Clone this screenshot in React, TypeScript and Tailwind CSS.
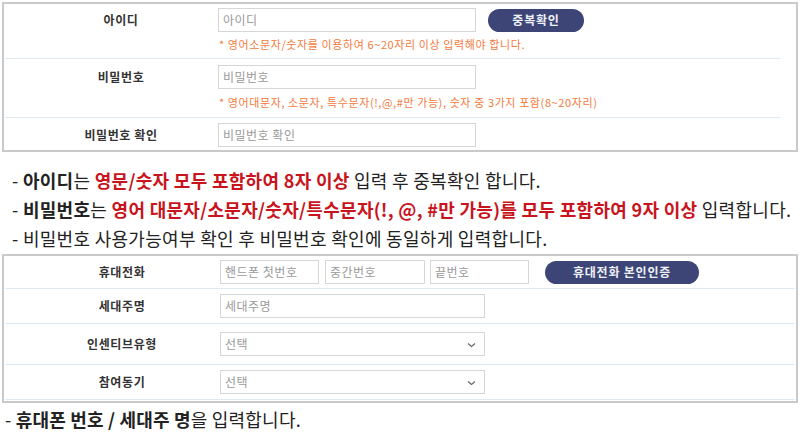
import React from "react";

const font = { fontFamily: '"Noto Sans CJK KR", "Noto Sans", sans-serif' };

function Input({ ph, w, select }: { ph: string; w: string; select?: boolean }) {
  return (
    <div className={`relative flex h-[24px] items-center border border-[#d6d6d6] bg-white pl-[4px] text-[12px] tracking-[0.5px] text-[#9a9a9a] ${w}`}>
      <span>{ph}</span>
      {select && (
        <svg className="absolute right-[8px] top-[9px]" width="9" height="6" viewBox="0 0 9 6">
          <path d="M1 1.5 L4.5 4.5 L8 1.5" fill="none" stroke="#666" strokeWidth="1.2" />
        </svg>
      )}
    </div>
  );
}

function Btn({ children, w }: { children: React.ReactNode; w: string }) {
  return (
    <div className={`flex h-[23px] items-center justify-center rounded-full bg-[#3c4576] text-[12px] font-bold tracking-[0.8px] text-[#eef0f6] ${w}`}>
      {children}
    </div>
  );
}

const labelCls = "text-[12px] font-bold tracking-[0.6px] text-[#333]";
const hintCls = "text-[11px] tracking-[0.6px] text-[#f47a3c]";

export default function App() {
  return (
    <div className="h-[437px] w-[800px] overflow-hidden bg-white text-[#222]" style={font}>
      <div className="pl-[2px] pt-[2px]">
        {/* top box */}
        <div className="h-[150px] w-[796px] border-2 border-[#c9c9c9]">
          <div className="mr-[16px] ml-[1px]">
            <div className="flex h-[55px] border-b border-[#dde9f3] pt-[4px]">
              <div className={`flex h-[24px] w-[213px] items-center justify-center pl-[19px] ${labelCls}`}>아이디</div>
              <div>
                <div className="flex items-center gap-[12px]">
                  <Input ph="아이디" w="w-[258px]" />
                  <Btn w="w-[96px]">중복확인</Btn>
                </div>
                <div className={`mt-[4px] pl-[1px] ${hintCls}`}>* 영어소문자/숫자를 이용하여 6~20자리 이상 입력해야 합니다.</div>
              </div>
            </div>
            <div className="flex h-[59px] border-b border-[#dde9f3] pt-[6px]">
              <div className={`flex h-[24px] w-[213px] items-center justify-center pl-[19px] ${labelCls}`}>비밀번호</div>
              <div>
                <Input ph="비밀번호" w="w-[258px]" />
                <div className={`mt-[5px] pl-[1px] ${hintCls}`}>* 영어대문자, 소문자, 특수문자(!,@,#만 가능), 숫자 중 3가지 포함(8~20자리)</div>
              </div>
            </div>
            <div className="flex pt-[5px]">
              <div className={`flex h-[24px] w-[213px] items-center justify-center pl-[19px] ${labelCls}`}>비밀번호 확인</div>
              <Input ph="비밀번호 확인" w="w-[258px]" />
            </div>
          </div>
        </div>
      </div>

      {/* notes */}
      <div className="pl-[12px] pt-[14px] text-[18px] leading-[29px] tracking-[0.3px] text-[#222]">
        <div>- <b>아이디</b>는 <b className="text-[#c8141c]">영문/숫자 모두 포함하여 8자 이상</b> 입력 후 중복확인 합니다.</div>
        <div>- <b>비밀번호</b>는 <b className="text-[#c8141c]">영어 대문자/소문자/숫자/특수문자(!, @, #만 가능)를 모두 포함하여 9자 이상</b> 입력합니다.</div>
        <div>- 비밀번호 사용가능여부 확인 후 비밀번호 확인에 동일하게 입력합니다.</div>
      </div>

      {/* bottom box */}
      <div className="pl-[2px] pt-[1px]">
        <div className="h-[149px] w-[796px] border-2 border-[#c9c9c9]">
          <div className="mx-[1px]">
            <div className="flex h-[33px] items-center border-b border-[#dde9f3]">
              <div className={`w-[215px] pl-[19px] text-center ${labelCls}`}>휴대전화</div>
              <div className="flex items-center">
                <Input ph="핸드폰 첫번호" w="w-[99px]" />
                <div className="w-[6px]" />
                <Input ph="중간번호" w="w-[100px]" />
                <div className="w-[5px]" />
                <Input ph="끝번호" w="w-[99px]" />
                <div className="w-[16px]" />
                <Btn w="w-[154px]">휴대전화 본인인증</Btn>
              </div>
            </div>
            <div className="flex h-[35px] items-center border-b border-[#dde9f3]">
              <div className={`w-[215px] pl-[19px] text-center ${labelCls}`}>세대주명</div>
              <Input ph="세대주명" w="w-[265px]" />
            </div>
            <div className="flex h-[41px] items-center border-b border-[#dde9f3]">
              <div className={`w-[215px] pl-[19px] text-center ${labelCls}`}>인센티브유형</div>
              <Input ph="선택" w="w-[265px]" select />
            </div>
            <div className="flex h-[35px] items-center border-b border-[#dde9f3]">
              <div className={`w-[215px] pl-[19px] text-center ${labelCls}`}>참여동기</div>
              <Input ph="선택" w="w-[265px]" select />
            </div>
          </div>
        </div>
      </div>

      <div className="pl-[5px] pt-[5px] text-[18px] leading-[22px] tracking-[0.2px] text-[#222]">
        - <b>휴대폰 번호 / 세대주 명</b>을 입력합니다.
      </div>
    </div>
  );
}
